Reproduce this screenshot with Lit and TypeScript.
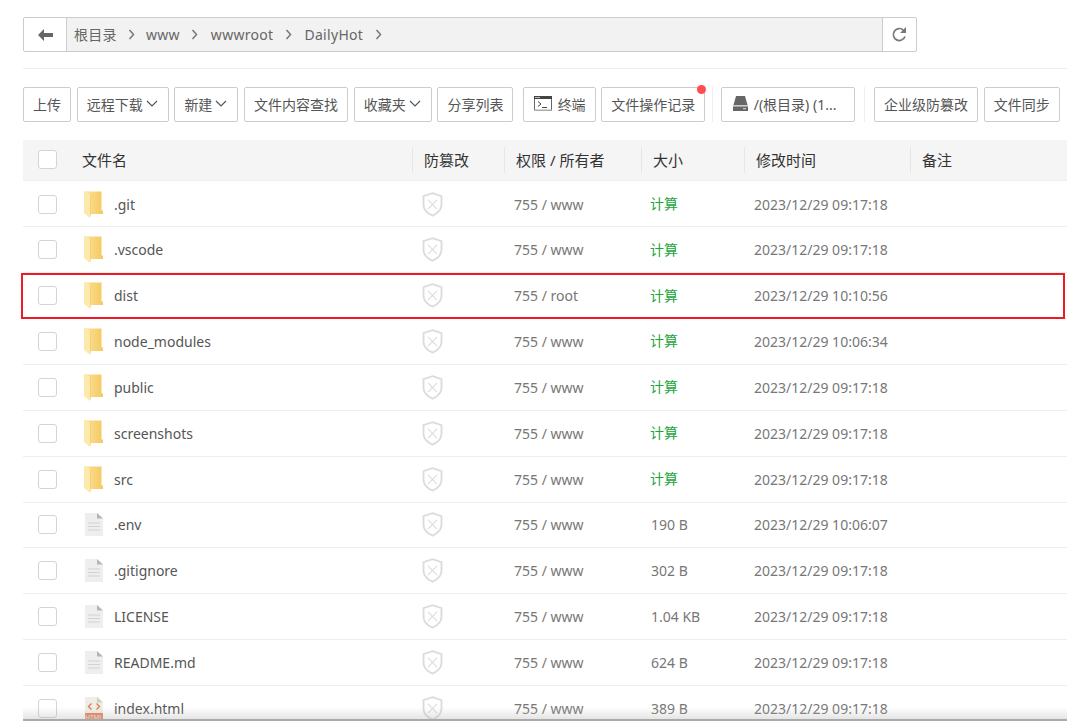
import { LitElement, html, css, svg } from 'lit';
import { customElement } from 'lit/decorators.js';

const folderIcon = html`<svg class="ficon" width="20" height="27" viewBox="0 0 20 27">
  <defs>
    <linearGradient id="fold" x1="0" x2="1" y1="0" y2="0">
      <stop offset="0" stop-color="#fbe29a"/>
      <stop offset="1" stop-color="#f4c95f"/>
    </linearGradient>
  </defs>
  <path d="M0.500 0.500H17.500V19.500H19V23H6V6z" fill="url(#fold)"/>
  <path d="M0 0l6 2.500V27l-6-5z" fill="#fde9ab"/>
  <path d="M6 2.500V27l1-4V3z" fill="#f3d27a"/>
</svg>`;

const fileIcon = html`<svg class="ficon doc" width="18" height="23" viewBox="0 0 18 23">
  <path d="M0 0h12l6 5.500V23H0z" fill="#eeeeee"/>
  <path d="M12 0l6 5.500h-6z" fill="#b5b5b5"/>
  <path d="M3 10h12M3 13.500h12M3 17h12" stroke="#d2d2d2" stroke-width="1.200"/>
</svg>`;

const htmlIcon = html`<svg class="ficon doc" width="18" height="23" viewBox="0 0 18 23">
  <path d="M0 0h12l6 5.500V23H0z" fill="#efeee6"/>
  <path d="M12 0l6 5.500h-6z" fill="#cfcdc0"/>
  <path d="M6.500 6.500l-3 3 3 3M11.500 6.500l3 3-3 3" fill="none" stroke="#e8794f" stroke-width="1.400"/>
  <rect y="16" width="18" height="7" fill="#e8835f"/>
  <text x="9" y="22.500" font-size="6.500" text-anchor="middle" fill="#fbe3d8">HTML</text>
</svg>`;

const shieldIcon = svg`<svg width="21" height="25" viewBox="0 0 21 25">
  <path d="M10.500 1.200l9 3v8.500c0 5-3.800 8.600-9 11-5.200-2.400-9-6-9-11V4.200z" fill="none" stroke="#dcdcdc" stroke-width="1.900"/>
  <path d="M6 7.800l9 9.400M15 7.800l-9 9.400" stroke="#dcdcdc" stroke-width="1.100"/>
</svg>`;

const chevronDown = html`<svg class="caret" width="12" height="7" viewBox="0 0 12 7"><path d="M1 1l5 5 5-5" fill="none" stroke="#555" stroke-width="1.200"/></svg>`;
const crumbSep = html`<svg class="sep" width="7" height="11" viewBox="0 0 7 11"><path d="M1.500 1l4 4.500-4 4.500" fill="none" stroke="#777" stroke-width="1.500"/></svg>`;

type Row = { name: string; icon: 'folder' | 'file' | 'html'; perm: string; size: string; time: string };

const rows: Row[] = [
  { name: '.git', icon: 'folder', perm: '755 / www', size: '', time: '2023/12/29 09:17:18' },
  { name: '.vscode', icon: 'folder', perm: '755 / www', size: '', time: '2023/12/29 09:17:18' },
  { name: 'dist', icon: 'folder', perm: '755 / root', size: '', time: '2023/12/29 10:10:56' },
  { name: 'node_modules', icon: 'folder', perm: '755 / www', size: '', time: '2023/12/29 10:06:34' },
  { name: 'public', icon: 'folder', perm: '755 / www', size: '', time: '2023/12/29 09:17:18' },
  { name: 'screenshots', icon: 'folder', perm: '755 / www', size: '', time: '2023/12/29 09:17:18' },
  { name: 'src', icon: 'folder', perm: '755 / www', size: '', time: '2023/12/29 09:17:18' },
  { name: '.env', icon: 'file', perm: '755 / www', size: '190 B', time: '2023/12/29 10:06:07' },
  { name: '.gitignore', icon: 'file', perm: '755 / www', size: '302 B', time: '2023/12/29 09:17:18' },
  { name: 'LICENSE', icon: 'file', perm: '755 / www', size: '1.04 KB', time: '2023/12/29 09:17:18' },
  { name: 'README.md', icon: 'file', perm: '755 / www', size: '624 B', time: '2023/12/29 09:17:18' },
  { name: 'index.html', icon: 'html', perm: '755 / www', size: '389 B', time: '2023/12/29 09:17:18' },
];

@customElement('app-root')
export class AppRoot extends LitElement {
  static styles = css`
    :host {
      display: block;
      position: relative;
      height: 721px;
      overflow: hidden;
      background: #fff;
      color: #666;
      font: 14px "Noto Sans", "Noto Sans CJK SC", sans-serif;
    }
    .page {
      padding: 17px 0 0 23px;
    }
    .crumbs {
      display: flex;
      width: 894px;
      height: 35px;
      box-sizing: border-box;
      border: 1px solid #ccc;
      border-radius: 2px;
    }
    .back {
      width: 42px;
      display: flex;
      align-items: center;
      justify-content: center;
      border-right: 1px solid #ccc;
    }
    .path {
      flex: 1;
      display: flex;
      align-items: center;
      padding: 0 0 1px 7px;
      background: #f2f2f2;
      color: #666;
      letter-spacing: 0.3px;
    }
    .sep {
      margin: 0 11.5px;
    }
    .tight {
      margin-left: -1px;
    }
    .wide {
      margin-left: 1px;
    }
    .refresh {
      width: 34px;
      box-sizing: border-box;
      display: flex;
      align-items: center;
      justify-content: center;
      border-left: 1px solid #ccc;
    }
    .rule {
      height: 1px;
      margin: 16px 0 18px;
      width: 1044px;
      background: #eee;
    }
    .tools {
      display: flex;
      height: 35px;
      gap: 5.7px;
      margin-bottom: 18px;
    }
    .btn {
      position: relative;
      display: flex;
      align-items: center;
      box-sizing: border-box;
      padding: 0 9px 2px;
      border: 1px solid #ccc;
      border-radius: 2px;
      white-space: nowrap;
      color: #555;
    }
    .caret {
      margin: 0 1px 0 3px;
    }
    .dot {
      position: absolute;
      top: -3px;
      right: -2px;
      width: 9px;
      height: 9px;
      border-radius: 50%;
      background: #ff4d4f;
    }
    .divider {
      width: 1px;
      background: #eee;
    }
    .divider.first {
      margin: 0 2px 0 1px;
    }
    .divider.second {
      margin: 0 3px 0 4px;
    }
    .term {
      margin-left: 3.5px;
      padding-left: 10px;
      gap: 6px;
    }
    .disk {
      width: 134px;
      padding-left: 11px;
      gap: 6px;
    }
    .grid {
      display: grid;
      grid-template-columns: 59px 330px 92px 137px 103px 166px 157px;
      align-items: center;
    }
    .head {
      height: 41.3px;
      background: #f5f5f5;
      border-bottom: 1px solid #eee;
      box-sizing: border-box;
      color: #333;
      font-size: 15px;
    }
    .head > div {
      display: flex;
      align-items: center;
      height: 24px;
      padding-bottom: 2px;
    }
    .head .col {
      border-left: 1px solid #e6e6e6;
      padding-left: 11px;
    }
    .row {
      height: 45.9px;
      box-sizing: border-box;
      border-bottom: 1px solid #eee;
    }
    .row.top {
      padding-top: 1.5px;
    }
    .box {
      width: 19px;
      height: 19px;
      box-sizing: border-box;
      margin-left: 15px;
      border: 1px solid #d4d4d4;
      border-radius: 3px;
      background: #fff;
    }
    .name {
      display: flex;
      align-items: center;
      margin-left: 2px;
      color: #555;
    }
    .ficon {
      flex: none;
      margin-right: 10px;
    }
    .doc {
      margin: 0 11px 0 1px;
    }
    .shield {
      display: flex;
      padding-left: 10px;
    }
    .perm {
      padding-left: 10px;
      color: #777;
    }
    .size {
      padding-left: 10px;
      color: #777;
    }
    .calc {
      display: block;
      margin: -1px 0 1px -1px;
      color: #20a53a;
    }
    .time {
      padding-left: 10px;
      color: #777;
    }
    .mark {
      position: absolute;
      left: 21px;
      top: 273px;
      width: 1044px;
      height: 46px;
      box-sizing: border-box;
      border: 2px solid #ed1c24;
    }
    .fade {
      position: absolute;
      left: 23px;
      right: 0;
      bottom: 0;
      height: 12px;
      background: linear-gradient(rgba(180, 180, 180, 0), rgba(180, 180, 180, 0.35));
      border-bottom: 2px solid #aaa;
    }
  `;

  renderIcon(kind: Row['icon']) {
    if (kind === 'folder') return folderIcon;
    if (kind === 'html') return htmlIcon;
    return fileIcon;
  }

  render() {
    return html`
      <div class="page">
        <div class="crumbs">
          <div class="back">
            <svg width="15" height="12" viewBox="0 0 15 12"><path d="M0 6l6-6v4h9v4H6v4z" fill="#666"/></svg>
          </div>
          <div class="path">
            <span>根目录</span>${crumbSep}<span class="tight">www</span>${crumbSep}<span class="wide">wwwroot</span>${crumbSep}<span class="wide">DailyHot</span>${crumbSep}
          </div>
          <div class="refresh">
            <svg width="17" height="17" viewBox="0 0 17 17"><path d="M14 10.500A6 6 0 1 1 12.300 4" fill="none" stroke="#777" stroke-width="1.700"/><path d="M15 1v6H9z" fill="#777"/></svg>
          </div>
        </div>
        <div class="rule"></div>
        <div class="tools">
          <div class="btn">上传</div>
          <div class="btn">远程下载${chevronDown}</div>
          <div class="btn">新建${chevronDown}</div>
          <div class="btn">文件内容查找</div>
          <div class="btn">收藏夹${chevronDown}</div>
          <div class="btn">分享列表</div>
          <div class="btn term">
            <svg width="18" height="15" viewBox="0 0 18 15">
              <rect x=".5" y=".5" width="17" height="14" fill="#fff" stroke="#666"/>
              <rect width="18" height="3" fill="#444"/>
              <rect x="1" y="1" width="5" height="1" fill="#bbb"/>
              <rect y="13.500" width="18" height="1.500" fill="#aaa"/>
              <path d="M4 5.500l3 2.500-3 2.500M8 11.500h5" fill="none" stroke="#444"/>
            </svg>
            终端
          </div>
          <div class="btn">文件操作记录<span class="dot"></span></div>
          <div class="divider first"></div>
          <div class="btn disk">
            <svg width="15" height="15" viewBox="0 0 15 15">
              <path d="M3 0h9l2.500 9H.500z" fill="#666"/>
              <rect y="9" width="15" height="1.500" fill="#ccc"/>
              <rect y="10.500" width="15" height="4.500" fill="#666"/>
              <rect x="10" y="12" width="3" height="1.200" fill="#ccc"/>
            </svg>
            /(根目录) (1...
          </div>
          <div class="divider second"></div>
          <div class="btn">企业级防篡改</div>
          <div class="btn">文件同步</div>
        </div>
        <div class="grid head">
          <div><div class="box"></div></div>
          <div>文件名</div>
          <div class="col">防篡改</div>
          <div class="col">权限 / 所有者</div>
          <div class="col">大小</div>
          <div class="col">修改时间</div>
          <div class="col">备注</div>
        </div>
        ${rows.map((r, i) => html`
          <div class="grid row ${i === 0 ? 'top' : ''}">
            <div><div class="box"></div></div>
            <div class="name">${this.renderIcon(r.icon)}<span>${r.name}</span></div>
            <div class="shield">${shieldIcon}</div>
            <div class="perm">${r.perm}</div>
            <div class="size">${r.size ? r.size : html`<span class="calc">计算</span>`}</div>
            <div class="time">${r.time}</div>
            <div></div>
          </div>
        `)}
      </div>
      <div class="mark"></div>
      <div class="fade"></div>
    `;
  }
}
